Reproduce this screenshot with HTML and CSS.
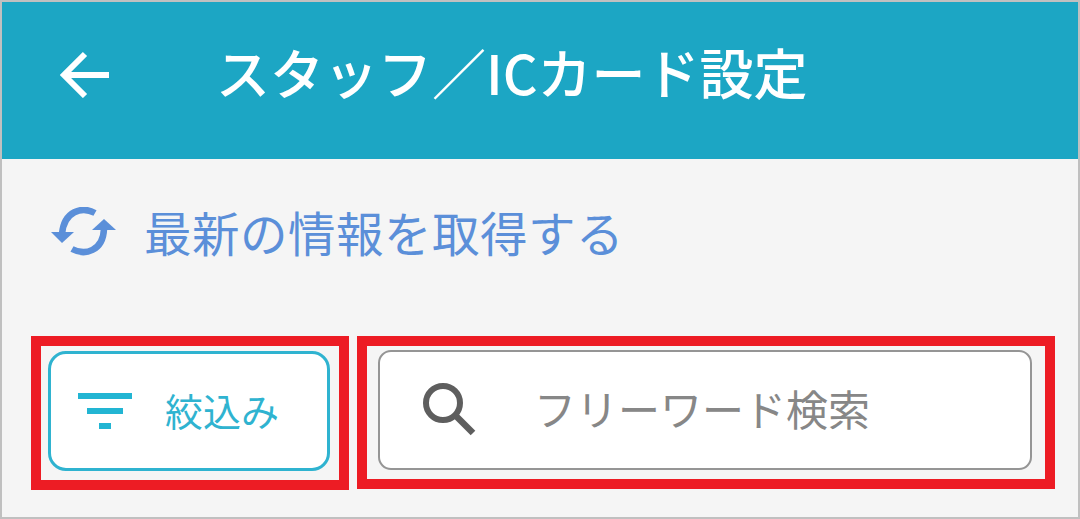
FILE: index.html
```html
<!DOCTYPE html>
<html lang="ja">
<head>
<meta charset="utf-8">
<title>スタッフ／ICカード設定</title>
<link rel="stylesheet" href="styles.css">
</head>
<body>
<div class="frame">
  <header class="header">
    <svg class="back" viewBox="0 0 50 48" width="50" height="48"><path d="M49 25H6M25 4 4 25l21 21" fill="none" stroke="#fff" stroke-width="6"/></svg>
    <h1 class="title">スタッフ／ICカード設定</h1>
  </header>
  <div class="refresh">
    <svg class="refresh-icon" viewBox="0 0 66 50" width="66" height="50">
      <path d="M44 6C31-1 13 4 11 27" fill="none" stroke="#5b8fd9" stroke-width="6.5"/>
      <path d="M0 25h23L11 36z" fill="#5b8fd9"/>
      <path d="M21 42c13 7 31 2 32-20" fill="none" stroke="#5b8fd9" stroke-width="6.5"/>
      <path d="M41 23h24L53 12z" fill="#5b8fd9"/>
    </svg>
    <span class="refresh-text">最新の情報を取得する</span>
  </div>
  <div class="controls">
    <div class="mark mark-filter">
      <button class="filter">
        <svg class="filter-icon" viewBox="0 0 54 37" width="54" height="37"><path d="M0 0h54v6H0zM9 15h36v6H9zM21 30h12v6H21z" fill="#22b5d3"/></svg>
        <span class="filter-text">絞込み</span>
      </button>
    </div>
    <div class="mark mark-search">
      <div class="search">
        <svg class="search-icon" viewBox="0 0 54 54" width="54" height="54"><circle cx="20" cy="20" r="17" fill="none" stroke="#5e5e5e" stroke-width="6"/><path d="M32 32l18 18" stroke="#5e5e5e" stroke-width="6.5"/></svg>
        <span class="search-text">フリーワード検索</span>
      </div>
    </div>
  </div>
</div>
</body>
</html>
```
FILE: styles.css
```css
* { box-sizing: border-box; }
html, body { margin: 0; padding: 0; }
body { width: 1080px; height: 519px; overflow: hidden; font-family: "Noto Sans CJK JP", "Noto Sans", sans-serif; }
.frame { width: 1080px; height: 519px; border: 2px solid #c0c0c0; background: #f5f5f5; }
.header { height: 157px; background: #1ca6c4; display: flex; align-items: center; padding: 0 0 14px 58px; }
.back { flex: none; }
.title { margin: -4px 0 0 106px; font-size: 54px; font-weight: 500; color: #fff; line-height: 1; white-space: nowrap; letter-spacing: 0; }
.refresh { display: flex; align-items: center; height: 78px; margin-top: 34px; padding-left: 49px; }
.refresh-icon { flex: none; }
.refresh-text { margin-left: 27px; font-size: 47.5px; letter-spacing: 0.5px; color: #5b8fd9; line-height: 1; white-space: nowrap; }
.controls { display: flex; margin: 65px 0 0 29px; gap: 8px; }
.mark { border: 10px solid #ed1c24; height: 154px; padding: 5px 7px; }
.mark-filter { width: 318px; }
.mark-search { width: 698px; padding: 4px 11px; height: 153px; }
.filter { width: 282px; height: 120px; border: 3px solid #2fb3d0; border-radius: 18px; background: #fff; display: flex; align-items: center; padding: 0 0 0 27px; margin: 0; font-family: inherit; }
.filter-icon { flex: none; }
.filter-text { margin: -2px 0 0 33px; font-size: 38px; color: #2fb3d0; letter-spacing: 0; line-height: 1; }
.search { width: 654px; height: 120px; border: 2px solid #959595; border-radius: 13px; background: #fff; display: flex; align-items: center; padding-left: 43px; }
.search-icon { flex: none; }
.search-text { margin: -4px 0 0 57px; font-size: 42px; color: #878787; line-height: 1; white-space: nowrap; }
```
